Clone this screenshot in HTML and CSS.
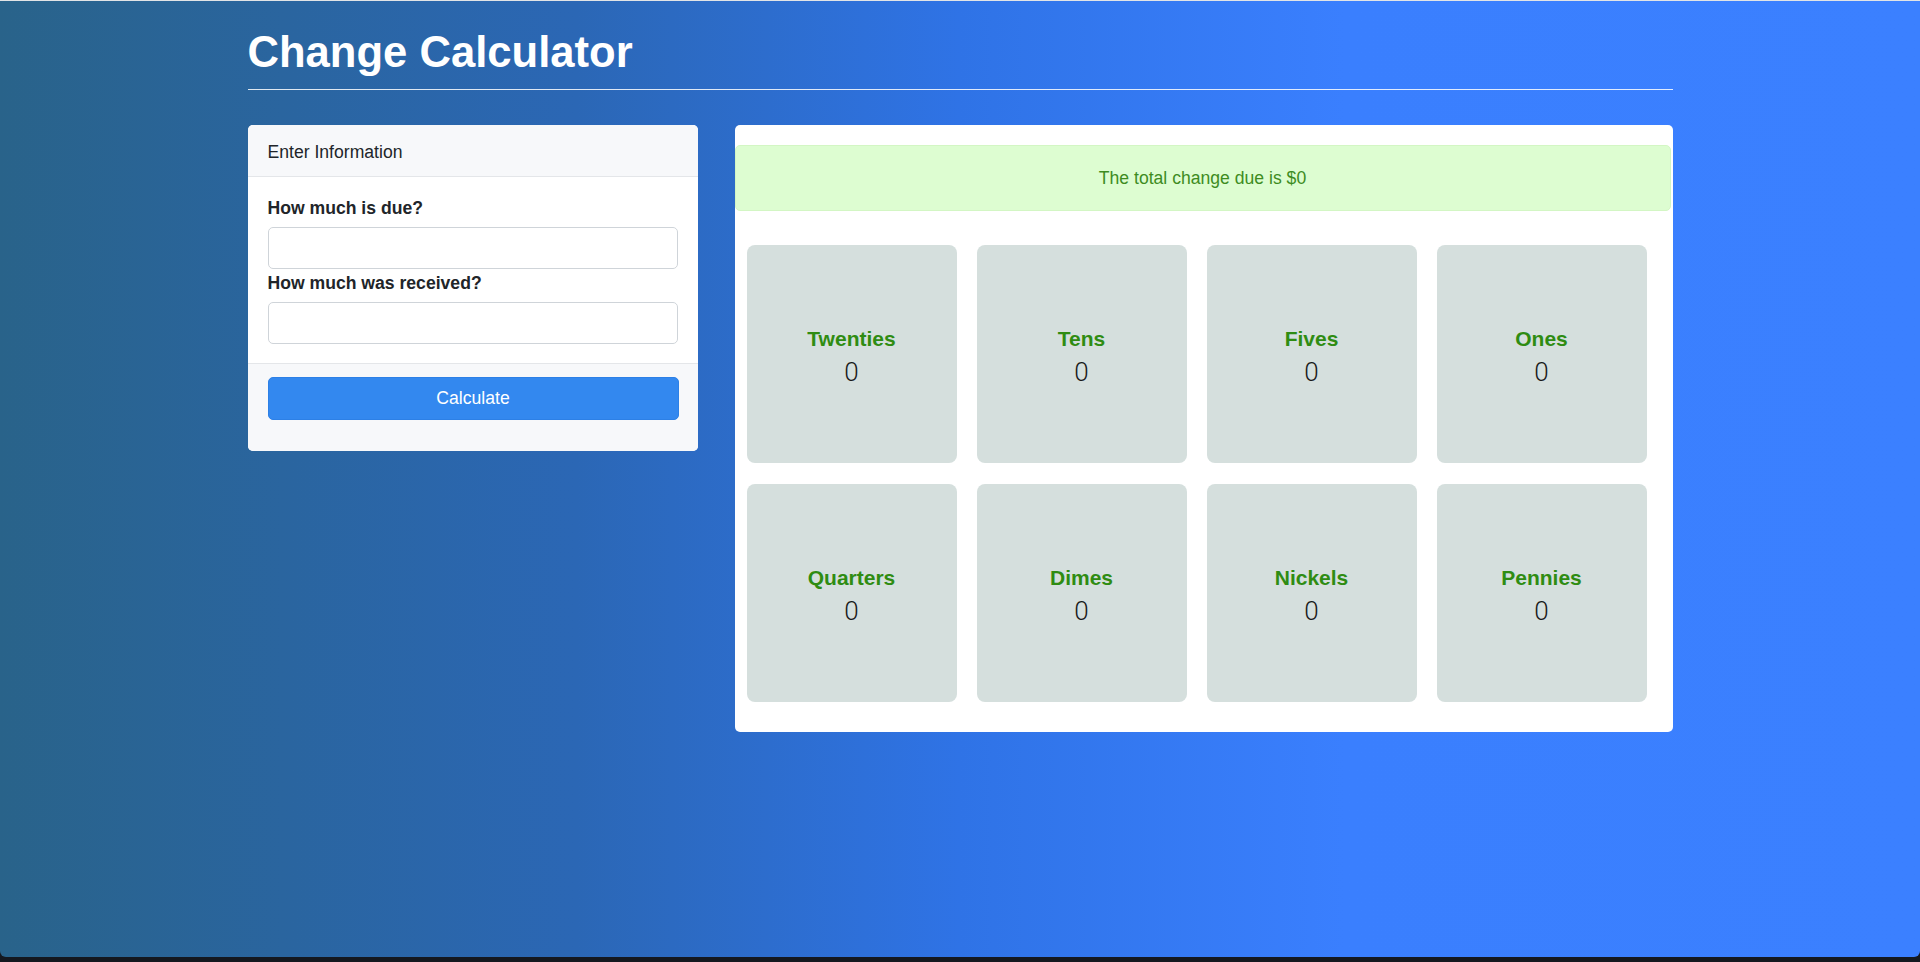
FILE: index.html
```html
<!DOCTYPE html>
<html lang="en">
<head>
<meta charset="utf-8">
<title>Change Calculator</title>
<link rel="stylesheet" href="styles.css">
</head>
<body>
<div class="screen">
  <div class="container">
    <h1 class="title">Change Calculator</h1>
    <hr class="rule">
    <div class="layout">
      <section class="card form-card">
        <div class="card-header">Enter Information</div>
        <div class="card-body">
          <label class="field-label" for="due">How much is due?</label>
          <input class="field-input" id="due" type="text">
          <label class="field-label" for="received">How much was received?</label>
          <input class="field-input" id="received" type="text">
        </div>
        <div class="card-footer">
          <button class="btn-calc" type="button">Calculate</button>
        </div>
      </section>
      <section class="card result-card">
        <div class="alert">The total change due is $0</div>
        <div class="tiles">
          <div class="tile"><div class="tile-name">Twenties</div><div class="tile-count">0</div></div>
          <div class="tile"><div class="tile-name">Tens</div><div class="tile-count">0</div></div>
          <div class="tile"><div class="tile-name">Fives</div><div class="tile-count">0</div></div>
          <div class="tile"><div class="tile-name">Ones</div><div class="tile-count">0</div></div>
          <div class="tile"><div class="tile-name">Quarters</div><div class="tile-count">0</div></div>
          <div class="tile"><div class="tile-name">Dimes</div><div class="tile-count">0</div></div>
          <div class="tile"><div class="tile-name">Nickels</div><div class="tile-count">0</div></div>
          <div class="tile"><div class="tile-name">Pennies</div><div class="tile-count">0</div></div>
        </div>
      </section>
    </div>
  </div>
</div>
</body>
</html>
```
FILE: styles.css
```css
* { box-sizing: border-box; }

html, body {
  margin: 0;
  padding: 0;
  height: 962px;
  overflow: hidden;
  background: #14181f;
  font-family: "Liberation Sans", Arial, Helvetica, sans-serif;
  color: #212529;
}

.screen {
  height: 957px;
  border-top: 1px solid #e2e4e6;
  border-radius: 0 0 6px 6px;
  background: linear-gradient(90deg, #29638a 0%, #2b67b5 30%, #2f73e6 50%, #3a7ffe 70%, #3b80ff 100%);
}

.container {
  width: 1425px;
  margin: 0 auto;
  padding-top: 25px;
}

.title {
  margin: 0;
  font-size: 43.6px;
  line-height: 52px;
  font-weight: 700;
  color: #ffffff;
}

.rule {
  margin: 11px 0 0 0;
  border: 0;
  border-top: 1px solid rgba(255, 255, 255, 0.85);
  height: 0;
}

.layout {
  margin-top: 35px;
  display: flex;
  gap: 37px;
  align-items: flex-start;
}

.card {
  background: #ffffff;
  border-radius: 5px;
  overflow: hidden;
}

.form-card {
  width: 450px;
  display: flex;
  flex-direction: column;
}

.card-header {
  height: 52px;
  padding: 4px 20px 0 20px;
  display: flex;
  align-items: center;
  background: #f7f8fa;
  border-bottom: 1px solid #e4e6e9;
  font-size: 17.6px;
  color: #212529;
}

.card-body {
  padding: 18px 20px 18px 20px;
  display: flex;
  flex-direction: column;
}

.field-label {
  font-weight: 700;
  font-size: 17.6px;
  line-height: 26px;
  margin-bottom: 6px;
  color: #212529;
}

.field-input {
  height: 42px;
  width: 410px;
  border: 1px solid #cfd4d9;
  border-radius: 5px;
  background: #ffffff;
  margin-bottom: 1px;
  font-size: 17.6px;
  padding: 6px 12px;
}

.card-footer {
  background: #f7f8fa;
  border-top: 1px solid #e4e6e9;
  padding: 13px 19px 31px 20px;
}

.btn-calc {
  display: block;
  width: 411px;
  height: 43px;
  border: 1px solid #2d80e6;
  border-radius: 5px;
  background: #3388ef;
  color: #ffffff;
  font-family: "Liberation Sans", Arial, Helvetica, sans-serif;
  font-size: 17.6px;
  cursor: pointer;
}

.result-card {
  width: 938px;
  padding: 20px 2px 30px 0;
}

.alert {
  height: 66px;
  display: flex;
  align-items: center;
  justify-content: center;
  background: #ddfdd1;
  border: 1px solid #d3f6c4;
  border-radius: 5px;
  color: #3d8c1f;
  font-size: 17.6px;
}

.tiles {
  margin-top: 34px;
  padding-left: 12px;
  display: grid;
  grid-template-columns: repeat(4, 210px);
  column-gap: 20px;
  row-gap: 21px;
}

.tile {
  height: 218px;
  background: #d5dfdd;
  border-radius: 8px;
  display: flex;
  flex-direction: column;
  align-items: center;
  justify-content: center;
  padding-top: 11px;
}

.tile-name {
  font-size: 21px;
  line-height: 25px;
  font-weight: 700;
  color: #2f8c12;
}

.tile-count {
  font-family: Roboto, "Liberation Sans", sans-serif;
  font-weight: 300;
  font-size: 26px;
  line-height: 43px;
  color: #1a1a1a;
}
```
